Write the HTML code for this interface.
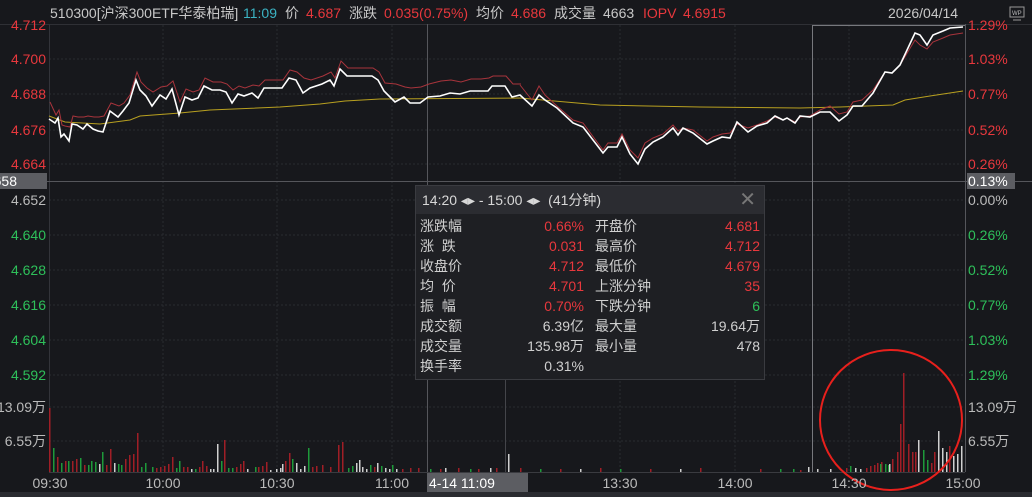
<!DOCTYPE html>
<html><head><meta charset="utf-8"><style>
body{margin:0;width:1032px;height:497px;background:#17181c;overflow:hidden;font-family:"Liberation Sans","Noto Sans CJK SC",sans-serif;}
svg{position:absolute;left:0;top:0}
.pop{position:absolute;left:415px;top:185px;width:350px;height:195px;background:#1e1f23;border:1px solid #3a3b40;box-sizing:border-box;color:#d0d0d0;font-size:14px}
.ph{height:28px;background:#2b2c31;line-height:28px;padding-left:6px;color:#d8d8d8}
.row{position:absolute;height:20px;line-height:20px}
.r{color:#e8383d}.g{color:#2ec05a}
</style></head><body>
<svg width="1032" height="497" font-family="Liberation Sans, Noto Sans CJK SC, sans-serif" font-size="14">
<g stroke="#2a2b30" stroke-dasharray="2,2" stroke-width="1">
<line x1="49" x2="965" y1="59" y2="59"/><line x1="49" x2="965" y1="94" y2="94"/><line x1="49" x2="965" y1="130" y2="130"/><line x1="49" x2="965" y1="164" y2="164"/>
<line x1="49" x2="965" y1="200" y2="200"/><line x1="49" x2="965" y1="235" y2="235"/><line x1="49" x2="965" y1="270" y2="270"/><line x1="49" x2="965" y1="305" y2="305"/><line x1="49" x2="965" y1="340" y2="340"/><line x1="49" x2="965" y1="375" y2="375"/><line x1="49" x2="965" y1="407" y2="407"/><line x1="49" x2="965" y1="441" y2="441"/>
<line x1="163" x2="163" y1="25" y2="472"/><line x1="277" x2="277" y1="25" y2="472"/><line x1="392" x2="392" y1="25" y2="472"/><line x1="620" x2="620" y1="25" y2="472"/><line x1="735" x2="735" y1="25" y2="472"/><line x1="849" x2="849" y1="25" y2="472"/>
</g>
<line x1="0" x2="1032" y1="24.5" y2="24.5" stroke="#2f3035"/>
<line x1="49.5" x2="49.5" y1="24" y2="472" stroke="#33343a"/>
<line x1="965.5" x2="965.5" y1="24" y2="472" stroke="#55565b"/>
<line x1="0" x2="1032" y1="181.5" y2="181.5" stroke="#55565b"/>
<line x1="427.5" x2="427.5" y1="24" y2="492" stroke="#55565b"/>
<line x1="505.5" x2="505.5" y1="380" y2="472" stroke="#44454a"/>
<path d="M812.5 472V25.5H965" fill="none" stroke="#77787d"/>
<rect x="0" y="173" width="47" height="16" fill="#5c5d62"/>
<rect x="967" y="173" width="48" height="16" fill="#5c5d62"/>
<polyline fill="none" stroke="#b8a020" stroke-width="1" points="49,116 65,122 100,124 130,120 140,116 180,113 210,110 280,107 320,104 345,101 380,99 520,98 600,105 700,107 800,108 840,107 893,105 905,100 930,96 963,91"/>
<g fill="none" stroke="#a8343c" stroke-width="1">
<polyline transform="translate(1,-8)" points="49,110 55,123 58,118 61,133 64,134 69,135 72,124 77,125 83,125 87,124 93,125 98,125 103,124 110,111 118,114 123,111 129,103 136,80 140,90 146,96 152,100 160,95 166,94 172,89 179,110 185,97 192,100 198,98 204,86 212,90 220,90 226,92 232,98 238,94 244,96 252,93 258,94 264,88 272,88 282,88 289,78 296,80 303,86 310,88 316,86 322,84 330,80 334,86 340,69 347,76 360,76 372,76 378,80 384,91 395,92 404,95 410,96 420,95 428,92 440,89 450,88 460,90 470,87 480,87 488,86 492,84 505,84 512,92 520,92"/>
<polyline points="520,85 532,100 539,86 545,95 557,106 573,120 583,123 603,150 608,143 617,143 622,134 630,150 638,158 645,143 653,138 663,134 673,125 678,131 683,128 693,130 707,141 713,137 722,134 730,133 737,124 748,128 757,125 767,121 775,117 783,120 787,118 795,122 800,117 810,116 820,110 830,106 839,114 847,112 853,102 862,100 873,90 885,72 892,73 900,65 915,40 920,45 927,49 933,42 943,38 950,35 963,33"/>
</g>
<polyline fill="none" stroke="#ffffff" stroke-width="1.6" points="49,119 55,123 58,118 61,137 64,134 69,141 72,124 77,125 83,129 87,124 93,129 98,131 103,132 110,111 118,117 123,111 129,103 136,80 140,90 146,96 152,106 160,95 166,99 172,89 179,115 185,97 192,100 198,98 204,86 212,90 220,90 226,92 232,103 238,94 244,96 252,93 258,98 264,88 272,88 282,88 289,78 296,80 303,93 310,88 316,86 322,84 330,80 334,86 340,69 347,76 360,76 372,76 378,80 384,91 395,102 404,97 410,103 420,103 428,97 440,96 450,93 460,94 470,91 480,91 488,91 492,86 505,86 512,97 520,95 532,106 539,95 545,100 557,108 573,123 583,127 603,153 608,147 617,147 622,137 630,154 638,164 645,149 653,142 663,137 673,128 678,135 683,128 693,133 707,144 713,141 722,137 730,138 737,122 748,132 757,126 767,123 775,116 783,120 787,118 795,123 800,116 810,117 820,112 830,112 839,121 847,115 853,106 862,106 873,93 885,72 892,73 900,65 915,33 920,35 927,45 933,35 943,31 950,28 963,27"/>
<g fill="#a01e26">
<rect x="49" y="408" width="1.5" height="64"/><rect x="57" y="457" width="1.5" height="15"/><rect x="65" y="461" width="1.5" height="11"/><rect x="72" y="461" width="1.5" height="11"/><rect x="76" y="459" width="1.5" height="13"/><rect x="84" y="465" width="1.5" height="7"/><rect x="106" y="465" width="1.5" height="7"/><rect x="110" y="449" width="1.5" height="23"/><rect x="125" y="459" width="1.5" height="13"/><rect x="129" y="455" width="1.5" height="17"/><rect x="133" y="454" width="1.5" height="18"/><rect x="137" y="433" width="1.5" height="39"/><rect x="156" y="468" width="1.5" height="4"/><rect x="160" y="467" width="1.5" height="5"/><rect x="164" y="466" width="1.5" height="6"/><rect x="168" y="464" width="1.5" height="8"/><rect x="172" y="457" width="1.5" height="15"/><rect x="183" y="467" width="1.5" height="5"/><rect x="187" y="467" width="1.5" height="5"/><rect x="199" y="467" width="1.5" height="5"/><rect x="202" y="461" width="1.5" height="11"/><rect x="206" y="466" width="1.5" height="6"/><rect x="224" y="440" width="1.5" height="32"/><rect x="236" y="467" width="1.5" height="5"/><rect x="240" y="464" width="1.5" height="8"/><rect x="243" y="461" width="1.5" height="11"/><rect x="258" y="467" width="1.5" height="5"/><rect x="262" y="466" width="1.5" height="6"/><rect x="266" y="462" width="1.5" height="10"/><rect x="285" y="461" width="1.5" height="11"/><rect x="289" y="453" width="1.5" height="19"/><rect x="312" y="467" width="1.5" height="5"/><rect x="316" y="466" width="1.5" height="6"/><rect x="322" y="465" width="1.5" height="7"/><rect x="330" y="467" width="1.5" height="5"/><rect x="338" y="445" width="1.5" height="27"/><rect x="342" y="442" width="1.5" height="30"/><rect x="374" y="467" width="1.5" height="5"/><rect x="402" y="469" width="1.5" height="3"/><rect x="410" y="468" width="1.5" height="4"/><rect x="418" y="468" width="1.5" height="4"/><rect x="440" y="469" width="1.5" height="3"/><rect x="458" y="468" width="1.5" height="4"/><rect x="478" y="469" width="1.5" height="3"/><rect x="496" y="468" width="1.5" height="4"/><rect x="520" y="468" width="1.5" height="4"/><rect x="560" y="469" width="1.5" height="3"/><rect x="600" y="468" width="1.5" height="4"/><rect x="650" y="469" width="1.5" height="3"/><rect x="700" y="468" width="1.5" height="4"/><rect x="760" y="469" width="1.5" height="3"/><rect x="800" y="470" width="1.5" height="2"/>
<rect x="846" y="468" width="1.5" height="4"/><rect x="866" y="468" width="1.5" height="4"/><rect x="870" y="466" width="1.5" height="6"/><rect x="874" y="465" width="1.5" height="7"/><rect x="877" y="463" width="1.5" height="9"/><rect x="881" y="462" width="1.5" height="10"/><rect x="892" y="459" width="1.5" height="13"/><rect x="897" y="452" width="1.5" height="20"/><rect x="900" y="424" width="1.5" height="48"/><rect x="903" y="373" width="1.5" height="99"/><rect x="908" y="444" width="1.5" height="28"/><rect x="912" y="452" width="1.5" height="20"/><rect x="915" y="452" width="1.5" height="20"/><rect x="931" y="463" width="1.5" height="9"/><rect x="934" y="452" width="1.5" height="20"/><rect x="949" y="446" width="1.5" height="26"/>
</g>
<g fill="#1e9a3a">
<rect x="53" y="448" width="1.5" height="24"/><rect x="61" y="463" width="1.5" height="9"/><rect x="68" y="461" width="1.5" height="11"/><rect x="80" y="458" width="1.5" height="14"/><rect x="88" y="465" width="1.5" height="7"/><rect x="91" y="461" width="1.5" height="11"/><rect x="95" y="462" width="1.5" height="10"/><rect x="102" y="452" width="1.5" height="20"/><rect x="118" y="464" width="1.5" height="8"/><rect x="121" y="465" width="1.5" height="7"/><rect x="141" y="467" width="1.5" height="5"/><rect x="145" y="463" width="1.5" height="9"/><rect x="152" y="467" width="1.5" height="5"/><rect x="176" y="468" width="1.5" height="4"/><rect x="179" y="461" width="1.5" height="11"/><rect x="195" y="469" width="1.5" height="3"/><rect x="221" y="461" width="1.5" height="11"/><rect x="228" y="468" width="1.5" height="4"/><rect x="232" y="468" width="1.5" height="4"/><rect x="255" y="467" width="1.5" height="5"/><rect x="292" y="459" width="1.5" height="13"/><rect x="308" y="448" width="1.5" height="24"/><rect x="348" y="468" width="1.5" height="4"/><rect x="352" y="466" width="1.5" height="6"/><rect x="370" y="465" width="1.5" height="7"/><rect x="381" y="466" width="1.5" height="6"/><rect x="392" y="465" width="1.5" height="7"/><rect x="430" y="469" width="1.5" height="3"/><rect x="470" y="469" width="1.5" height="3"/><rect x="540" y="469" width="1.5" height="3"/><rect x="620" y="469" width="1.5" height="3"/><rect x="780" y="469" width="1.5" height="3"/><rect x="793" y="469" width="1.5" height="3"/><rect x="850" y="466" width="1.5" height="6"/><rect x="880" y="464" width="1.5" height="8"/><rect x="885" y="464" width="1.5" height="8"/><rect x="888" y="465" width="1.5" height="7"/><rect x="923" y="450" width="1.5" height="22"/><rect x="927" y="460" width="1.5" height="12"/>
</g>
<g fill="#d0d0d0">
<rect x="99" y="464" width="1.5" height="8"/><rect x="114" y="463" width="1.5" height="9"/><rect x="191" y="469" width="1.5" height="3"/><rect x="210" y="469" width="1.5" height="3"/><rect x="213" y="469" width="1.5" height="3"/><rect x="217" y="444" width="1.5" height="28"/><rect x="247" y="469" width="1.5" height="3"/><rect x="270" y="470" width="1.5" height="2"/><rect x="276" y="469" width="1.5" height="3"/><rect x="280" y="468" width="1.5" height="4"/><rect x="282" y="464" width="1.5" height="8"/><rect x="296" y="463" width="1.5" height="9"/><rect x="300" y="469" width="1.5" height="3"/><rect x="304" y="466" width="1.5" height="6"/><rect x="356" y="463" width="1.5" height="9"/><rect x="359" y="460" width="1.5" height="12"/><rect x="362" y="467" width="1.5" height="5"/><rect x="366" y="469" width="1.5" height="3"/><rect x="377" y="463" width="1.5" height="9"/><rect x="385" y="468" width="1.5" height="4"/><rect x="389" y="469" width="1.5" height="3"/><rect x="396" y="469" width="1.5" height="3"/><rect x="445" y="468" width="1.5" height="4"/><rect x="490" y="468" width="1.5" height="4"/><rect x="508" y="454" width="1.5" height="18"/><rect x="580" y="469" width="1.5" height="3"/><rect x="680" y="469" width="1.5" height="3"/><rect x="808" y="467" width="1.5" height="5"/><rect x="817" y="469" width="1.5" height="3"/><rect x="830" y="469" width="1.5" height="3"/><rect x="855" y="468" width="1.5" height="4"/><rect x="860" y="469" width="1.5" height="3"/><rect x="889" y="464" width="1.5" height="8"/><rect x="918" y="440" width="1.5" height="32"/><rect x="938" y="431" width="1.5" height="41"/><rect x="942" y="448" width="1.5" height="24"/><rect x="946" y="452" width="1.5" height="20"/><rect x="953" y="456" width="1.5" height="16"/><rect x="957" y="454" width="1.5" height="18"/><rect x="961" y="446" width="1.5" height="26"/>
</g>
<line x1="49" x2="965" y1="472.5" y2="472.5" stroke="#3a3b40"/>
<ellipse cx="891" cy="420" rx="71" ry="70" fill="none" stroke="#e8201c" stroke-width="2"/>
<g text-anchor="end">
<text x="46" y="30" fill="#e8383d">4.712</text><text x="46" y="64" fill="#e8383d">4.700</text><text x="46" y="99" fill="#e8383d">4.688</text><text x="46" y="135" fill="#e8383d">4.676</text><text x="46" y="169" fill="#e8383d">4.664</text>
<text x="17" y="186" fill="#ffffff">658</text>
<text x="46" y="205" fill="#bbbbbb">4.652</text><text x="46" y="240" fill="#2ec05a">4.640</text><text x="46" y="275" fill="#2ec05a">4.628</text><text x="46" y="310" fill="#2ec05a">4.616</text><text x="46" y="345" fill="#2ec05a">4.604</text><text x="46" y="380" fill="#2ec05a">4.592</text>
<text x="46" y="412" fill="#bbbbbb">13.09万</text><text x="46" y="446" fill="#bbbbbb">6.55万</text>
</g>
<g>
<text x="968" y="30" fill="#e8383d">1.29%</text><text x="968" y="64" fill="#e8383d">1.03%</text><text x="968" y="99" fill="#e8383d">0.77%</text><text x="968" y="135" fill="#e8383d">0.52%</text><text x="968" y="169" fill="#e8383d">0.26%</text>
<text x="968" y="186" fill="#ffffff">0.13%</text>
<text x="968" y="205" fill="#bbbbbb">0.00%</text><text x="968" y="240" fill="#2ec05a">0.26%</text><text x="968" y="275" fill="#2ec05a">0.52%</text><text x="968" y="310" fill="#2ec05a">0.77%</text><text x="968" y="345" fill="#2ec05a">1.03%</text><text x="968" y="380" fill="#2ec05a">1.29%</text>
<text x="968" y="412" fill="#bbbbbb">13.09万</text><text x="968" y="446" fill="#bbbbbb">6.55万</text>
</g>
<rect x="427" y="473" width="101" height="19" fill="#5c5d62"/>
<g fill="#bbbbbb" text-anchor="middle">
<text x="50" y="488">09:30</text><text x="163" y="488">10:00</text><text x="277" y="488">10:30</text><text x="392" y="488">11:00</text><text x="620" y="488">13:30</text><text x="735" y="488">14:00</text><text x="849" y="488">14:30</text><text x="963" y="488">15:00</text>
</g>
<text x="429" y="488" fill="#ffffff">4-14 11:09</text>
<rect x="0" y="492" width="1032" height="5" fill="#2a2b30"/>
<g>
<text x="50" y="18" fill="#c8c8c8">510300[沪深300ETF华泰柏瑞]</text>
<text x="243" y="18" fill="#3bb3c3">11:09</text>
<text x="285" y="18" fill="#c8c8c8">价</text><text x="306" y="18" fill="#e8383d">4.687</text>
<text x="349" y="18" fill="#c8c8c8">涨跌</text><text x="384" y="18" fill="#e8383d">0.035(0.75%)</text>
<text x="476" y="18" fill="#c8c8c8">均价</text><text x="511" y="18" fill="#e8383d">4.686</text>
<text x="554" y="18" fill="#c8c8c8">成交量</text><text x="603" y="18" fill="#c8c8c8">4663</text>
<text x="643" y="18" fill="#e8383d">IOPV</text><text x="683" y="18" fill="#e8383d">4.6915</text>
<text x="888" y="18" fill="#c8c8c8">2026/04/14</text>
</g>
<rect x="1010" y="7" width="14" height="10" fill="none" stroke="#999" stroke-width="1"/>
<text x="1012" y="15" fill="#bbb" font-size="6">WP</text>
<line x1="1013" x2="1021" y1="20" y2="20" stroke="#999"/>
</svg>
<div class="pop">
<div class="ph">14:20 ◂▸ - 15:00 ◂▸ &nbsp;(41分钟)<span style="position:absolute;right:8px;top:0;color:#777;font-size:20px">✕</span></div>
<div class="row" style="left:4px;top:30px">涨跌幅</div><div class="row r" style="right:180px;top:30px">0.66%</div><div class="row" style="left:179px;top:30px">开盘价</div><div class="row r" style="right:4px;top:30px">4.681</div>
<div class="row" style="left:4px;top:50px">涨&nbsp;&nbsp;跌</div><div class="row r" style="right:180px;top:50px">0.031</div><div class="row" style="left:179px;top:50px">最高价</div><div class="row r" style="right:4px;top:50px">4.712</div>
<div class="row" style="left:4px;top:70px">收盘价</div><div class="row r" style="right:180px;top:70px">4.712</div><div class="row" style="left:179px;top:70px">最低价</div><div class="row r" style="right:4px;top:70px">4.679</div>
<div class="row" style="left:4px;top:90px">均&nbsp;&nbsp;价</div><div class="row r" style="right:180px;top:90px">4.701</div><div class="row" style="left:179px;top:90px">上涨分钟</div><div class="row r" style="right:4px;top:90px">35</div>
<div class="row" style="left:4px;top:110px">振&nbsp;&nbsp;幅</div><div class="row r" style="right:180px;top:110px">0.70%</div><div class="row" style="left:179px;top:110px">下跌分钟</div><div class="row g" style="right:4px;top:110px">6</div>
<div class="row" style="left:4px;top:130px">成交额</div><div class="row" style="right:180px;top:130px">6.39亿</div><div class="row" style="left:179px;top:130px">最大量</div><div class="row" style="right:4px;top:130px">19.64万</div>
<div class="row" style="left:4px;top:150px">成交量</div><div class="row" style="right:180px;top:150px">135.98万</div><div class="row" style="left:179px;top:150px">最小量</div><div class="row" style="right:4px;top:150px">478</div>
<div class="row" style="left:4px;top:170px">换手率</div><div class="row" style="right:180px;top:170px">0.31%</div>
</div>
</body></html>
